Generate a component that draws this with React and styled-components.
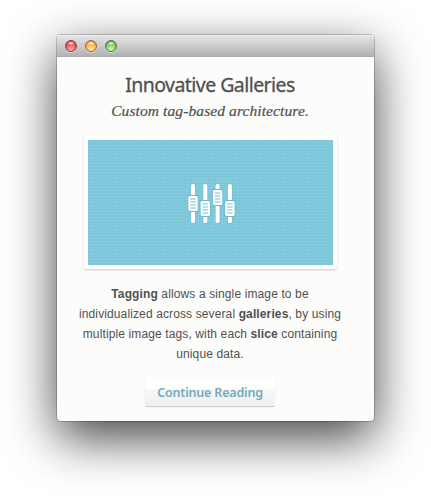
import React from "react";
import styled, { createGlobalStyle } from "styled-components";

const GlobalStyle = createGlobalStyle`
  html, body { margin: 0; background: #fff; overflow: hidden; }
  * { box-sizing: border-box; }
`;

const Desktop = styled.div`
  width: 431px;
  height: 500px;
  padding: 35px 0 0 57px;
`;

const Window = styled.main`
  width: 317px;
  height: 386px;
  border-radius: 4px;
  background: #fcfcfa;
  box-shadow: 0 0 0 1px rgba(0, 0, 0, 0.2), 0 17px 50px rgba(0, 0, 0, 0.74);
`;

const TitleBar = styled.header`
  display: flex;
  align-items: center;
  gap: 8px;
  height: 22px;
  padding-left: 8px;
  border-radius: 4px 4px 0 0;
  background: linear-gradient(#e6e6e6, #cbcbcb 50%, #b0b0b0);
  box-shadow: inset 0 1px #f0f0f0, inset 0 -1px #ababab;
`;

const Light = styled.span`
  width: 12px;
  height: 12px;
  border-radius: 50%;
  border: 1px solid ${(p) => p.$rim};
  background:
    radial-gradient(ellipse 4px 2px at 50% 22%, rgba(255, 255, 255, 0.9), transparent),
    radial-gradient(circle at 50% 85%, ${(p) => p.$glow}, ${(p) => p.$color} 60%, ${(p) => p.$rim});
  box-shadow: 0 1px rgba(255, 255, 255, 0.4);
`;

const Content = styled.section`
  display: flex;
  flex-direction: column;
  align-items: center;
  padding: 15px 27px 0 16px;
  color: #505152;
  text-align: center;
`;

const Title = styled.h1`
  margin: 0;
  font: 400 19.5px/26px "Noto Sans", sans-serif;
  letter-spacing: -0.55px;
  -webkit-text-stroke: 0.3px currentColor;
  white-space: nowrap;
`;

const Subtitle = styled.p`
  margin: 2px 0 0;
  font: italic 15.5px/22px "Liberation Serif", serif;
  letter-spacing: 0.1px;
  -webkit-text-stroke: 0.2px currentColor;
  white-space: nowrap;
`;

const Frame = styled.figure`
  width: 253px;
  height: 133px;
  margin: 14px 0 0;
  padding: 4px;
  border-radius: 2px;
  background: #fff;
  box-shadow: 0 1px 2px rgba(0, 0, 0, 0.2);
`;

const Picture = styled.div`
  display: flex;
  justify-content: center;
  height: 125px;
  padding: 42px 0 0 3px;
  background:
    radial-gradient(circle at 1px 1px, rgba(70, 155, 185, 0.24) 0.4px, transparent 1px) 0 0 / 3px 3px,
    #84cbdd;
`;

const Copy = styled.p`
  margin: 15px 0 0;
  font: 12px/20px "Liberation Sans", Arial, sans-serif;
  letter-spacing: 0.12px;
`;

const Line = styled.span`
  display: block;
  white-space: nowrap;
`;

const Button = styled.button`
  width: 130px;
  height: 28px;
  margin: 14px 0 0;
  padding: 0;
  border: 0;
  border-radius: 2px;
  background: linear-gradient(#fff 36%, #f6f6f7 44%, #f0f0f1);
  box-shadow: 0 1px 1px rgba(0, 0, 0, 0.22);
  color: #73abbb;
  font: 600 12.5px/27px "Noto Sans", sans-serif;
  letter-spacing: -0.18px;
  white-space: nowrap;
`;

const sliders = [
  { x: 0, y: 13 },
  { x: 12.3, y: 18 },
  { x: 24.6, y: 7 },
  { x: 36.9, y: 18 },
];

function MixerIcon() {
  return (
    <svg width="50" height="44" viewBox="-1 -1 50 44" aria-hidden="true">
      {sliders.map(({ x, y }) => (
        <g key={x} transform={`translate(${x} 0)`}>
          <rect x="2.4" y="0.3" width="5.2" height="40.7" rx="2.5" fill="#70b9cc" opacity="0.7" />
          <rect x="3" y="1" width="4" height="39" rx="1.6" fill="#fff" />
          <rect x="-0.5" y={y - 1} width="11" height="17" rx="2" fill="#70b9cc" />
          <rect x="0.3" y={y} width="9.4" height="15" rx="1.6" fill="#fff" />
          {[3, 6, 9, 12].map((line) => (
            <rect key={line} x="2.2" y={y + line - 0.5} width="5.6" height="1" fill="#78bfd0" />
          ))}
        </g>
      ))}
    </svg>
  );
}

export default function App() {
  return (
    <Desktop>
      <GlobalStyle />
      <Window>
        <TitleBar>
          <Light $rim="#983d42" $color="#e7484f" $glow="#ffb4aa" />
          <Light $rim="#a16c31" $color="#efae49" $glow="#fff09a" />
          <Light $rim="#4c803d" $color="#78be60" $glow="#d1ffaa" />
        </TitleBar>
        <Content>
          <Title>Innovative Galleries</Title>
          <Subtitle>Custom tag-based architecture.</Subtitle>
          <Frame>
            <Picture>
              <MixerIcon />
            </Picture>
          </Frame>
          <Copy>
            <Line><strong>Tagging</strong> allows a single image to be</Line>
            <Line>individualized across several <strong>galleries</strong>, by using</Line>
            <Line>multiple image tags, with each <strong>slice</strong> containing</Line>
            <Line>unique data.</Line>
          </Copy>
          <Button>Continue Reading</Button>
        </Content>
      </Window>
    </Desktop>
  );
}
